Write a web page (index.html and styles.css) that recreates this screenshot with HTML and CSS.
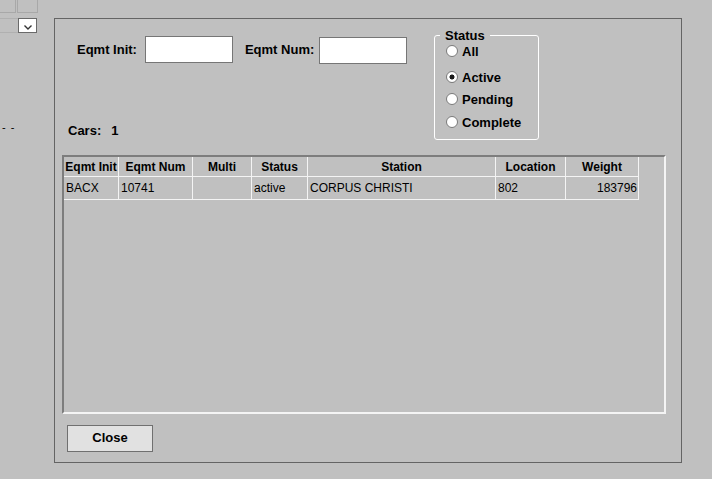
FILE: index.html
```html
<!DOCTYPE html>
<html>
<head>
<meta charset="utf-8">
<link rel="stylesheet" href="styles.css">
</head>
<body>
<div class="page">
  <div class="frag frag-a"></div>
  <div class="frag frag-b"></div>
  <div class="frag frag-row"></div>
  <div class="combo">
    <svg width="8" height="5" viewBox="0 0 8 5"><path d="M0.5 0.5 L4 4 L7.5 0.5" fill="none" stroke="#333" stroke-width="1.4"/></svg>
  </div>
  <div class="dashes">- -</div>

  <div class="dialog">
    <div class="top">
      <div class="left">
        <div class="fields">
          <label class="lbl">Eqmt Init:</label>
          <input class="box box-init" type="text">
          <label class="lbl lbl-num">Eqmt Num:</label>
          <input class="box box-num" type="text">
        </div>
        <div class="cars">Cars:<span class="count">1</span></div>
      </div>
      <fieldset class="status">
        <legend>Status</legend>
        <label class="opt opt-first"><input type="radio" name="st">All</label>
        <label class="opt"><input type="radio" name="st" checked>Active</label>
        <label class="opt"><input type="radio" name="st">Pending</label>
        <label class="opt opt-last"><input type="radio" name="st">Complete</label>
      </fieldset>
    </div>

    <div class="grid-wrap">
      <div class="grid">
        <div class="hd">Eqmt Init</div>
        <div class="hd">Eqmt Num</div>
        <div class="hd">Multi</div>
        <div class="hd">Status</div>
        <div class="hd">Station</div>
        <div class="hd">Location</div>
        <div class="hd">Weight</div>
        <div class="cell">BACX</div>
        <div class="cell">10741</div>
        <div class="cell"></div>
        <div class="cell">active</div>
        <div class="cell">CORPUS CHRISTI</div>
        <div class="cell">802</div>
        <div class="cell num">183796</div>
      </div>
    </div>

    <button class="close">Close</button>
  </div>
</div>
</body>
</html>
```

FILE: styles.css
```css
html, body {
  margin: 0;
  padding: 0;
  background: #c0c0c0;
  width: 712px;
  height: 479px;
  overflow: hidden;
  font-family: "Liberation Sans", Arial, sans-serif;
  color: #000;
}

.page {
  position: relative;
  width: 712px;
  height: 479px;
}

.frag {
  position: absolute;
  box-sizing: border-box;
  border-color: #a8a8a8;
  border-style: solid;
  border-width: 0;
}

.frag-a {
  left: 0;
  top: -1px;
  width: 16px;
  height: 14px;
  border-right-width: 1px;
  border-bottom-width: 1px;
}

.frag-b {
  left: 17px;
  top: -1px;
  width: 21px;
  height: 14px;
  border-left-width: 1px;
  border-right-width: 1px;
  border-bottom-width: 1px;
}

.frag-row {
  left: 0;
  top: 18px;
  width: 19px;
  height: 15px;
  border-top-width: 1px;
  border-bottom-width: 1px;
  border-color: #b0b0b0;
}

.combo {
  position: absolute;
  left: 18px;
  top: 18px;
  width: 19px;
  height: 15px;
  box-sizing: border-box;
  border: 1px solid #6a6a6a;
  background: #fff;
  display: flex;
  align-items: flex-end;
  justify-content: center;
  padding-bottom: 2px;
}

.combo svg {
  display: block;
}

.dashes {
  position: absolute;
  left: 2px;
  top: 120px;
  font-size: 11px;
  line-height: 14px;
  letter-spacing: 1px;
}

.dialog {
  position: absolute;
  left: 54px;
  top: 18px;
  width: 628px;
  height: 445px;
  box-sizing: border-box;
  border: 1px solid #646464;
  display: flex;
  flex-direction: column;
}

.top {
  display: flex;
  height: 136px;
  box-sizing: border-box;
  padding: 10px 0 0 13px;
}

.left {
  width: 366px;
  display: flex;
  flex-direction: column;
  justify-content: space-between;
}

.fields {
  display: flex;
  align-items: center;
  margin: 7px 0 0 9px;
}

.lbl {
  font-size: 13px;
  font-weight: bold;
  line-height: 15px;
}

.box {
  width: 88px;
  height: 27px;
  box-sizing: border-box;
  border: 1px solid #767676;
  background: #fff;
  margin: 0;
  padding: 0;
}

.box-init {
  margin-left: 8px;
}

.lbl-num {
  margin-left: 12px;
}

.box-num {
  margin-left: 5px;
  position: relative;
  top: 1px;
}

.cars {
  font-size: 13px;
  font-weight: bold;
  line-height: 15px;
  margin-bottom: 17px;
}

.count {
  margin-left: 10px;
}

.status {
  align-self: flex-start;
  width: 105px;
  box-sizing: border-box;
  margin: -1px 0 0 0;
  border: 1px solid #fff;
  border-radius: 3px;
  padding: 0 0 6px 11px;
  display: block;
}

.status legend {
  font-size: 13px;
  font-weight: bold;
  line-height: 15px;
  padding: 0 5px;
  margin-left: -6px;
}

.opt {
  display: flex;
  align-items: center;
  height: 22px;
  font-size: 13px;
  font-weight: bold;
}

.opt-first {
  margin-top: -3px;
  margin-bottom: 4px;
}

.opt-last {
  margin-top: 1px;
}

.opt input {
  appearance: none;
  -webkit-appearance: none;
  width: 12px;
  height: 12px;
  margin: 0 4px 0 0;
  box-sizing: border-box;
  border: 1px solid #7a7a7a;
  border-radius: 50%;
  background: #fff;
}

.opt input:checked {
  background: radial-gradient(circle, #1a1a1a 0, #1a1a1a 2.2px, #fff 2.8px);
}

.grid-wrap {
  margin-left: 7px;
  width: 604px;
  height: 259px;
  box-sizing: border-box;
  border-style: solid;
  border-width: 2px;
  border-color: #7d7d7d #f4f4f4 #f4f4f4 #7d7d7d;
}

.grid {
  display: grid;
  grid-template-columns: 55px 74px 59px 56px 188px 70px 73px;
  grid-template-rows: 20px 23px;
  width: 575px;
}

.hd, .cell {
  box-sizing: border-box;
  border-right: 1px solid #f4f4f4;
  border-bottom: 1px solid #f4f4f4;
  font-size: 12px;
  white-space: nowrap;
  overflow: hidden;
  display: flex;
  align-items: center;
}

.hd {
  font-weight: bold;
  justify-content: center;
}

.cell {
  padding: 0 1px 0 2px;
}

.cell.num {
  justify-content: flex-end;
}

.close {
  margin: 11px 0 0 12px;
  width: 86px;
  height: 27px;
  box-sizing: border-box;
  border: 1px solid #707070;
  background: #e1e1e1;
  font-family: "Liberation Sans", Arial, sans-serif;
  font-size: 13px;
  font-weight: bold;
  color: #000;
  padding: 0 0 2px 0;
}
```
